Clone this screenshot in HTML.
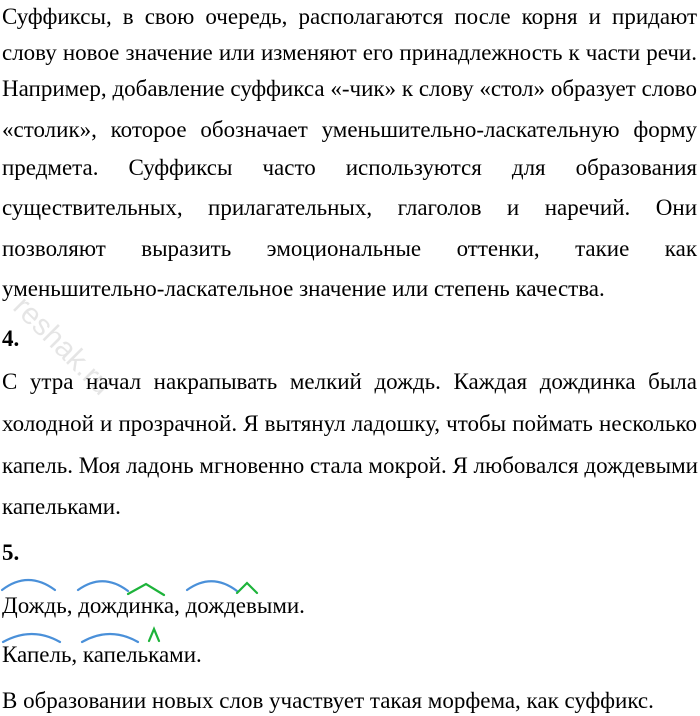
<!DOCTYPE html>
<html><head><meta charset="utf-8"><style>
body{margin:0;width:700px;height:716px;background:#fff;position:relative;overflow:hidden;font-family:"Liberation Serif","Times New Roman",serif;font-size:23px;color:#000}
.l{position:absolute;left:2px;width:695px;line-height:26px;white-space:nowrap}
.j{text-align:justify;text-align-last:justify}
b{font-weight:bold}
</style></head><body>
<div class="l j" style="top:4px">Суффиксы, в свою очередь, располагаются после корня и придают</div>
<div class="l j" style="top:40px">слову новое значение или изменяют его принадлежность к части речи.</div>
<div class="l j" style="top:76px">Например, добавление суффикса «-чик» к слову «стол» образует слово</div>
<div class="l j" style="top:117px">«столик», которое обозначает уменьшительно-ласкательную форму</div>
<div class="l j" style="top:155px">предмета. Суффиксы часто используются для образования</div>
<div class="l j" style="top:195px">существительных, прилагательных, глаголов и наречий. Они</div>
<div class="l j" style="top:236px">позволяют выразить эмоциональные оттенки, такие как</div>
<div class="l" style="top:276px">уменьшительно-ласкательное значение или степень качества.</div>
<div class="l" style="top:326px"><b>4.</b></div>
<div class="l j" style="top:369px">С утра начал накрапывать мелкий дождь. Каждая дождинка была</div>
<div class="l j" style="top:411px">холодной и прозрачной. Я вытянул ладошку, чтобы поймать несколько</div>
<div class="l j" style="top:453px">капель. Моя ладонь мгновенно стала мокрой. Я любовался дождевыми</div>
<div class="l" style="top:494px">капельками.</div>
<div class="l" style="top:540px"><b>5.</b></div>
<div class="l" style="top:593px">Дождь, дождинка, дождевыми.</div>
<div class="l" style="top:642px">Капель, капельками.</div>
<div class="l" style="top:688px">В образовании новых слов участвует такая морфема, как суффикс.</div>
<div style="position:absolute;transform:rotate(45deg);transform-origin:0 0;font-family:'Liberation Sans',sans-serif;font-size:30px;color:rgba(0,0,0,0.10);left:30px;top:290px">reshak.ru</div>
<svg width="700" height="716" style="position:absolute;left:0;top:0" fill="none" stroke-width="2.2" stroke-linecap="round">
<g stroke="#4a90d9">
<path d="M2 590 Q28 570 55 590"/>
<path d="M78 590 Q103 572 128 591"/>
<path d="M187 590 Q212 572 237 591"/>
<path d="M3 642 Q32 626 60 642"/>
<path d="M82 642 Q110 626 138 642"/>
</g>
<g stroke="#1db33a">
<path d="M128 594 L146 584 L164 595"/>
<path d="M237 593 L247 583 L257 593"/>
<path d="M149 641 L154 629 L159 641"/>
</g>
</svg>
</body></html>
